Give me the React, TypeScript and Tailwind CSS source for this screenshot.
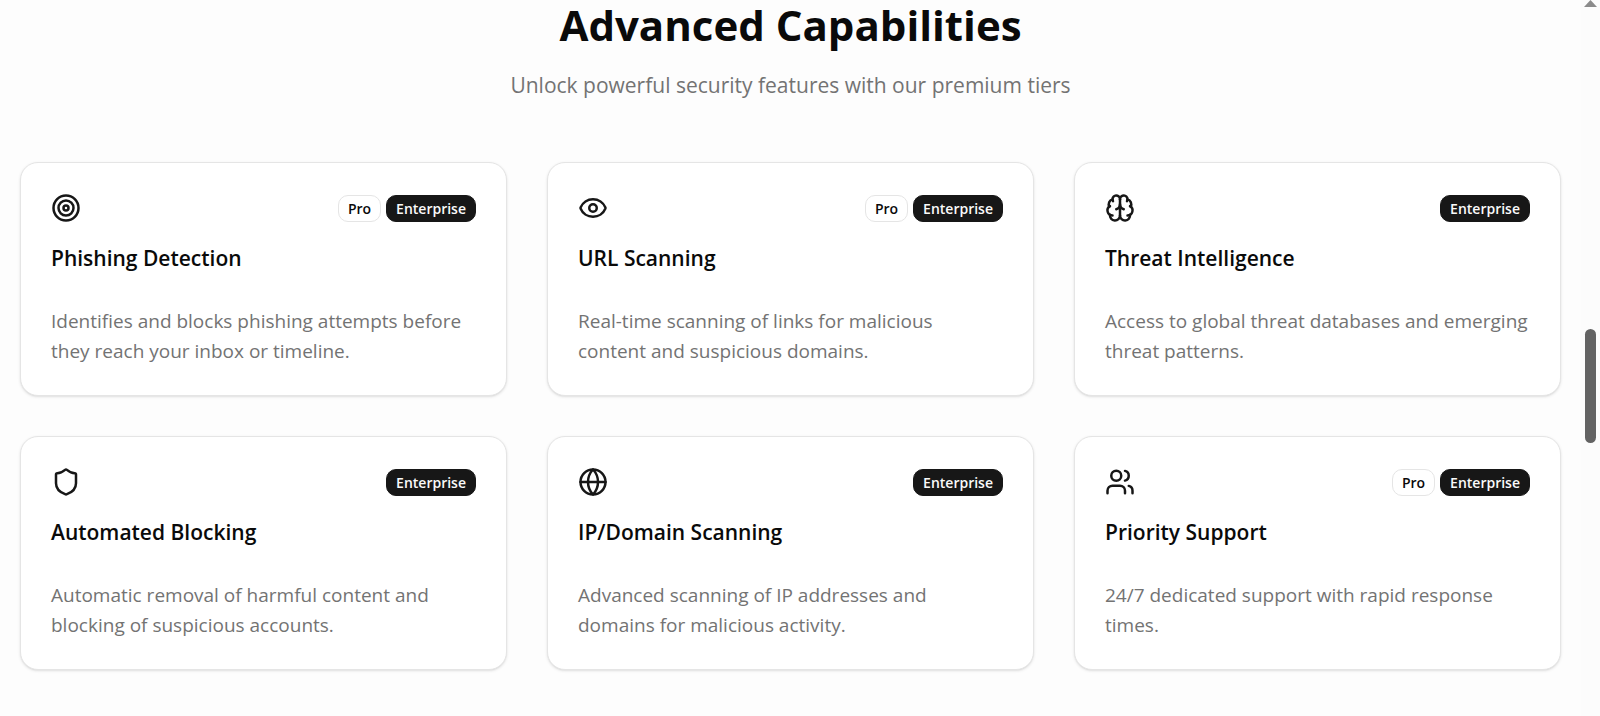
import { Brain, Eye, Globe, Shield, Target, Users, type LucideIcon } from "lucide-react";

type Tier = "Pro" | "Enterprise";

type Capability = {
  icon: LucideIcon;
  title: string;
  description: string;
  tiers: Tier[];
};

const capabilities: Capability[] = [
  {
    icon: Target,
    title: "Phishing Detection",
    description:
      "Identifies and blocks phishing attempts before they reach your inbox or timeline.",
    tiers: ["Pro", "Enterprise"],
  },
  {
    icon: Eye,
    title: "URL Scanning",
    description:
      "Real-time scanning of links for malicious content and suspicious domains.",
    tiers: ["Pro", "Enterprise"],
  },
  {
    icon: Brain,
    title: "Threat Intelligence",
    description:
      "Access to global threat databases and emerging threat patterns.",
    tiers: ["Enterprise"],
  },
  {
    icon: Shield,
    title: "Automated Blocking",
    description:
      "Automatic removal of harmful content and blocking of suspicious accounts.",
    tiers: ["Enterprise"],
  },
  {
    icon: Globe,
    title: "IP/Domain Scanning",
    description:
      "Advanced scanning of IP addresses and domains for malicious activity.",
    tiers: ["Enterprise"],
  },
  {
    icon: Users,
    title: "Priority Support",
    description: "24/7 dedicated support with rapid response times.",
    tiers: ["Pro", "Enterprise"],
  },
];

function TierBadge({ tier }: { tier: Tier }) {
  return (
    <span
      className={`rounded-[10px] border px-[9px] text-sm leading-[25px] font-semibold ${
        tier === "Enterprise"
          ? "border-[#171717] bg-[#171717] text-[#fafafa]"
          : "border-[#e5e5e5] text-[#0a0a0a]"
      }`}
    >
      {tier}
    </span>
  );
}

function CapabilityCard({ icon: Icon, title, description, tiers }: Capability) {
  return (
    <div className="rounded-[18px] border border-[#e5e5e5] bg-white px-[30px] pt-[30px] pb-[29px] shadow-sm">
      <div className="flex items-center justify-between">
        <Icon size={30} className="text-[#171717]" />
        <div className="flex gap-[5px]">
          {tiers.map((tier) => (
            <TierBadge key={tier} tier={tier} />
          ))}
        </div>
      </div>
      <h3 className="mt-5 text-[21px] leading-[30px] font-semibold text-[#0a0a0a]">
        {title}
      </h3>
      <p className="mt-[33px] text-[19px] leading-[30px] text-[#737373]">
        {description}
      </p>
    </div>
  );
}

export default function App() {
  return (
    <div className="flex min-h-screen bg-[#fdfdfd] font-['Open_Sans','Noto_Sans',sans-serif]">
      <main className="flex-1 px-5">
        <div className="text-center">
          <h2 className="text-[42px] leading-[50px] font-bold text-[#0a0a0a]">
            Advanced Capabilities
          </h2>
          <p className="mt-5 text-[21px] leading-[30px] text-[#737373]">
            Unlock powerful security features with our premium tiers
          </p>
        </div>
        <div className="mt-[62px] grid grid-cols-1 gap-10 md:grid-cols-2 lg:grid-cols-3">
          {capabilities.map((capability) => (
            <CapabilityCard key={capability.title} {...capability} />
          ))}
        </div>
      </main>
      {/* scrollbar */}
      <div className="flex w-[19px] flex-col items-center bg-[#fcfcfc]">
        <svg width="13" height="7" viewBox="0 0 13 7" fill="#8b8b8b">
          <path d="M6.5 0 13 7H0z" />
        </svg>
        <div className="mt-[322px] h-[114px] w-[11px] rounded-full bg-[#636363]" />
      </div>
    </div>
  );
}
